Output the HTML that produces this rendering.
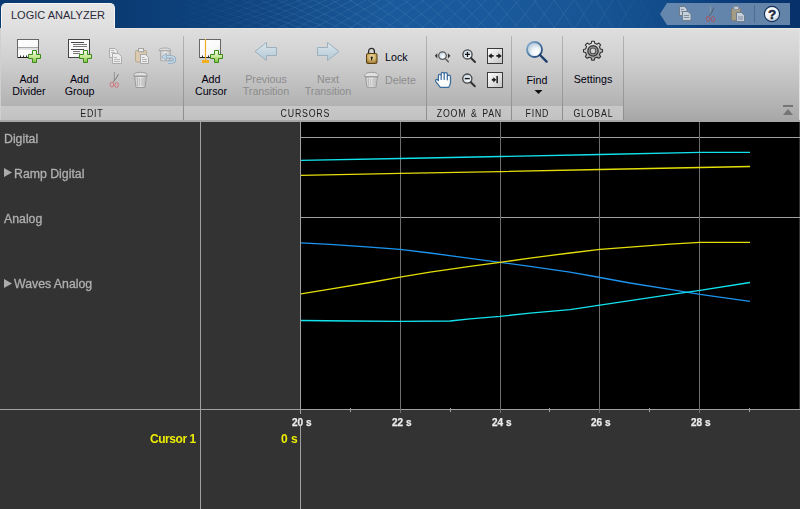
<!DOCTYPE html>
<html><head><meta charset="utf-8">
<style>
*{margin:0;padding:0;box-sizing:border-box}
html,body{width:800px;height:509px;overflow:hidden;background:#333;font-family:"Liberation Sans",sans-serif}
.abs{position:absolute}
#hdr{left:0;top:0;width:800px;height:28px;background:linear-gradient(90deg,#0a3a72 0%,#0b3b73 15%,#0f4580 31%,#1a599b 48%,#1a599b 62%,#175494 75%,#114a88 84%,#0a3a78 92%,#06316a 100%)}
#tab{left:1px;top:3px;width:114px;height:26px;border-radius:5px 5px 0 0;background:linear-gradient(#e6e6e6,#dfdfdf);border:1px solid #f6f6f6;border-bottom:none}
#tab span{position:absolute;left:9px;top:5px;font-size:11px;color:#2a2a3a;letter-spacing:0px}
#tb{left:0;top:28px;width:800px;height:94px;background:linear-gradient(#dfdfdf 0%,#d0d0d0 33%,#b5b5b5 78%,#acacac 91%,#a6a6a6 100%)}
.band{position:absolute;top:78px;height:14px;background:linear-gradient(#c8c8c8,#c2c2c2)}
.sep{position:absolute;top:8px;width:1px;height:84px;background:linear-gradient(#b4b4b4,#8c8c8c)}
.lbl{position:absolute;font-size:10.7px;line-height:12px;color:#00000f;text-align:center;white-space:nowrap}
.dis{color:#8c8c8c}
.grp{position:absolute;top:80px;font-size:10px;letter-spacing:0.9px;word-spacing:1.5px;color:#202020;text-align:center;padding-left:0.9px;transform:scaleX(0.88)}
#dark{left:0;top:122px;width:800px;height:387px;background:#333}
.ll{position:absolute;font-size:12.3px;color:#b0b0b0;white-space:nowrap;will-change:transform;-webkit-text-stroke:0.3px #b0b0b0}
.tick{position:absolute;top:414px;height:12px;padding:4px 1px 0 1px;line-height:10px;background:#333;font-size:10px;font-weight:bold;color:#ececec;white-space:nowrap;will-change:transform;-webkit-text-stroke:0.25px #ececec}
</style></head><body>
<div id="hdr" class="abs"></div>
<svg class="abs" style="left:0;top:0" width="800" height="28">
<defs>
<linearGradient id="mfade" x1="0" y1="0" x2="800" y2="0" gradientUnits="userSpaceOnUse">
<stop offset="0.20" stop-color="#fff" stop-opacity="0"/>
<stop offset="0.40" stop-color="#fff" stop-opacity="1"/>
<stop offset="0.72" stop-color="#fff" stop-opacity="1"/>
<stop offset="0.86" stop-color="#fff" stop-opacity="0"/>
</linearGradient>
<mask id="mm"><rect width="800" height="28" fill="url(#mfade)"/></mask>
</defs>
<g mask="url(#mm)"><path d="M-100.0,28L-15.2,0M-100.0,0L-15.2,28M-82.0,28L2.8,0M-82.0,0L2.8,28M-64.0,28L20.8,0M-64.0,0L20.8,28M-46.0,28L38.8,0M-46.0,0L38.8,28M-28.0,28L56.8,0M-28.0,0L56.8,28M-10.0,28L74.8,0M-10.0,0L74.8,28M8.0,28L92.8,0M8.0,0L92.8,28M26.0,28L110.8,0M26.0,0L110.8,28M44.0,28L128.8,0M44.0,0L128.8,28M62.0,28L146.8,0M62.0,0L146.8,28M80.0,28L164.8,0M80.0,0L164.8,28M98.0,28L182.8,0M98.0,0L182.8,28M116.0,28L200.8,0M116.0,0L200.8,28M134.0,28L218.8,0M134.0,0L218.8,28M152.0,28L236.8,0M152.0,0L236.8,28M170.0,28L254.8,0M170.0,0L254.8,28M188.0,28L272.8,0M188.0,0L272.8,28M206.0,28L288.1,0M206.0,0L288.1,28M224.0,28L301.3,0M224.0,0L301.3,28M242.0,28L313.7,0M242.0,0L313.7,28M260.0,28L326.5,0M260.0,0L326.5,28M278.0,28L339.5,0M278.0,0L339.5,28M296.0,28L352.8,0M296.0,0L352.8,28M314.0,28L366.5,0M314.0,0L366.5,28M332.0,28L380.4,0M332.0,0L380.4,28M350.0,28L394.6,0M350.0,0L394.6,28M368.0,28L409.2,0M368.0,0L409.2,28M386.0,28L424.0,0M386.0,0L424.0,28M404.0,28L439.1,0M404.0,0L439.1,28M422.0,28L454.4,0M422.0,0L454.4,28M440.0,28L470.0,0M440.0,0L470.0,28M458.0,28L485.9,0M458.0,0L485.9,28M476.2,28L502.1,0M476.2,0L502.1,28M494.9,28L518.9,0M494.9,0L518.9,28M514.1,28L536.4,0M514.1,0L536.4,28M533.8,28L554.5,0M533.8,0L554.5,28M554.1,28L573.3,0M554.1,0L573.3,28M574.8,28L592.7,0M574.8,0L592.7,28M596.2,28L612.8,0M596.2,0L612.8,28M618.1,28L633.6,0M618.1,0L633.6,28M640.1,28L655.4,0M640.1,0L655.4,28M662.1,28L677.4,0M662.1,0L677.4,28M684.1,28L699.4,0M684.1,0L699.4,28M706.1,28L721.4,0M706.1,0L721.4,28M728.1,28L743.4,0M728.1,0L743.4,28M750.1,28L765.4,0M750.1,0L765.4,28M772.1,28L787.4,0M772.1,0L787.4,28M794.1,28L809.4,0M794.1,0L809.4,28" fill="none" stroke="#9ab8dc" stroke-opacity="0.17" stroke-width="0.8"/></g>
<path d="M660,14 L667,3 H790 V25 H667 Z" fill="#7492b4" fill-opacity="0.85"/>
<g stroke="#6e7c8c" fill="#c6d0da" stroke-width="1">
<path d="M679.5,6.5 H684.5 L687,9 V15.5 H679.5 Z"/>
<path d="M681,9.5 h2.5 M681,11.5 h3" stroke="#7e8c9c"/>
<path d="M682.5,11.5 H688 L691,14.5 V20.5 H682.5 Z"/>
<path d="M684,15.5 h5 M684,17.5 h5" stroke="#7e8c9c"/>
</g>
<line x1="710.4" y1="6" x2="710.4" y2="15" stroke="#94a0a0" stroke-width="0.7"/>
<path d="M714,7.5 Q712.3,12 709.3,16" fill="none" stroke="#4c5c6c" stroke-width="1"/>
<ellipse cx="708" cy="18.8" rx="1.7" ry="2.6" fill="none" stroke="#a85464" stroke-width="1"/>
<ellipse cx="712.9" cy="19.2" rx="1.7" ry="2.6" fill="none" stroke="#a85464" stroke-width="1"/>
<rect x="731.5" y="8.5" width="9" height="12" rx="1" fill="#a39d88" stroke="#857f70"/>
<rect x="734" y="6.5" width="4.5" height="3" fill="#c4ccd4" stroke="#8a96a2"/>
<path d="M736.5,12.5 H741.5 L744.5,15.5 V21.5 H736.5 Z" fill="#c6d0da" stroke="#6e7c8c"/>
<path d="M738,17 h5 M738,19 h5" stroke="#7e8c9c"/>
<line x1="754.5" y1="5" x2="754.5" y2="23" stroke="#4e6e90" stroke-width="1"/>
<defs><radialGradient id="helpg" cx="0.4" cy="0.3" r="0.8"><stop offset="0" stop-color="#ffffff"/><stop offset="0.6" stop-color="#f0f2f6"/><stop offset="1" stop-color="#9fb0c4"/></radialGradient></defs>
<circle cx="772" cy="14" r="7.6" fill="url(#helpg)" stroke="#143058" stroke-width="1.1"/>
<text x="772.2" y="18.9" text-anchor="middle" font-family="Liberation Sans" font-weight="bold" font-size="13.5" fill="#1c2a40" stroke="#1c2a40" stroke-width="0.5">?</text>
</svg>
<div id="tab" class="abs"><span>LOGIC ANALYZER</span></div>
<div id="tb" class="abs">
  <div class="abs" style="left:0;top:0;width:1px;height:92px;background:#cfcfcf"></div>
  <div class="abs" style="left:799px;top:0;width:1px;height:92px;background:#e2e2e2"></div>
  <div class="abs" style="left:115px;top:0;width:685px;height:1px;background:#e8e7e4"></div>
  <div class="band" style="left:1px;width:182px"></div>
  <div class="band" style="left:184px;width:242px"></div>
  <div class="band" style="left:427px;width:84px"></div>
  <div class="band" style="left:512px;width:50px"></div>
  <div class="band" style="left:563px;width:60px"></div>
  <div class="sep" style="left:183px"></div>
  <div class="sep" style="left:426px"></div>
  <div class="sep" style="left:511px"></div>
  <div class="sep" style="left:562px"></div>
  <div class="sep" style="left:623px"></div>
  <div class="lbl" style="left:4px;width:50px;top:45px">Add<br>Divider</div>
  <div class="lbl" style="left:54.5px;width:50px;top:45px">Add<br>Group</div>
  <div class="lbl" style="left:186px;width:50px;top:45px">Add<br>Cursor</div>
  <div class="lbl dis" style="left:236px;width:60px;top:45px">Previous<br>Transition</div>
  <div class="lbl dis" style="left:298px;width:60px;top:45px">Next<br>Transition</div>
  <div class="lbl" style="left:385px;top:22.5px;text-align:left">Lock</div>
  <div class="lbl dis" style="left:385px;top:46px;text-align:left">Delete</div>
  <div class="lbl" style="left:512px;width:50px;top:46px">Find</div>
  <div class="lbl" style="left:563px;width:60px;top:45px">Settings</div>
  <div class="grp" style="left:0;width:183px">EDIT</div>
  <div class="grp" style="left:184px;width:242px">CURSORS</div>
  <div class="grp" style="left:427px;width:84px">ZOOM &amp; PAN</div>
  <div class="grp" style="left:512px;width:50px">FIND</div>
  <div class="grp" style="left:563px;width:60px">GLOBAL</div>
</div>
<svg class="abs" style="left:0;top:0" width="800" height="122">
<defs>
  <linearGradient id="pg" x1="0" y1="0" x2="0" y2="1"><stop offset="0" stop-color="#f4fce8"/><stop offset="0.5" stop-color="#c8e89a"/><stop offset="1" stop-color="#84c040"/></linearGradient>
  <linearGradient id="docg" x1="0" y1="0" x2="1" y2="1"><stop offset="0" stop-color="#ffffff"/><stop offset="0.6" stop-color="#fafafa"/><stop offset="1" stop-color="#d8d8d8"/></linearGradient>
  <linearGradient id="arg" x1="0" y1="0" x2="0" y2="1"><stop offset="0" stop-color="#dbe7ee"/><stop offset="1" stop-color="#b3c7d3"/></linearGradient>
  <linearGradient id="boxg" x1="0" y1="0" x2="1" y2="1"><stop offset="0" stop-color="#ffffff"/><stop offset="1" stop-color="#c4c4c4"/></linearGradient>
  <radialGradient id="lensg" cx="0.6" cy="0.65" r="0.6"><stop offset="0" stop-color="#ffffff"/><stop offset="1" stop-color="#c6d8e6"/></radialGradient>
  <radialGradient id="lockg" cx="0.5" cy="0.35" r="0.7"><stop offset="0" stop-color="#f4e6b4"/><stop offset="0.6" stop-color="#c8a65a"/><stop offset="1" stop-color="#8a6a28"/></radialGradient>
  <linearGradient id="trg" x1="0" y1="0" x2="1" y2="0"><stop offset="0" stop-color="#c8c8c8"/><stop offset="0.5" stop-color="#ececec"/><stop offset="1" stop-color="#c0c0c0"/></linearGradient>
  
</defs>
<!-- Add Divider -->
<rect x="17.5" y="39.5" width="21" height="18" fill="url(#docg)" stroke="#666"/>
<line x1="18" y1="57.5" x2="38" y2="57.5" stroke="#222"/>
<rect x="18" y="47" width="20" height="1.3" fill="#a8a8a8"/>
<rect x="18" y="48.3" width="20" height="1.5" fill="#e2e2e2"/>
<path d="M20.5,57 v-1.5 M23.5,57 v-1.5 M26.5,57 v-1.5" stroke="#333" stroke-width="1"/>
<g transform="translate(28,50)"><path d="M4.5,0.5 H8.5 V4.5 H12.5 V8.5 H8.5 V12.5 H4.5 V8.5 H0.5 V4.5 H4.5 Z" fill="url(#pg)" stroke="#3a8a1a" stroke-width="1"/></g>
<!-- Add Group -->
<rect x="68.5" y="39.5" width="21" height="18" fill="url(#docg)" stroke="#444"/>
<g stroke-width="1">
<line x1="71" y1="42.5" x2="84" y2="42.5" stroke="#444"/>
<line x1="73" y1="44.5" x2="87" y2="44.5" stroke="#777"/>
<line x1="73" y1="46.5" x2="87" y2="46.5" stroke="#777"/>
<line x1="71" y1="49.5" x2="84" y2="49.5" stroke="#444"/>
<line x1="73" y1="51.5" x2="80" y2="51.5" stroke="#777"/>
<line x1="73" y1="53.5" x2="80" y2="53.5" stroke="#777"/>
</g>
<g transform="translate(79,50)"><path d="M4.5,0.5 H8.5 V4.5 H12.5 V8.5 H8.5 V12.5 H4.5 V8.5 H0.5 V4.5 H4.5 Z" fill="url(#pg)" stroke="#3a8a1a" stroke-width="1"/></g>
<!-- copy disabled -->
<g stroke="#ababab" fill="#ececec" stroke-width="1">
<path d="M109.5,48.5 H115 L117.5,51 V57.5 H109.5 Z"/>
<path d="M112.5,53.5 H118.5 L121.5,56.5 V63.5 H112.5 Z"/>
<path d="M111,50.5 h3 M111,52.5 h4 M114,57.5 h3 M114,59.5 h6 M114,61.5 h6" stroke="#b8b8b8"/>
</g>
<!-- paste disabled -->
<rect x="135.5" y="50.5" width="11" height="11.5" rx="1.2" fill="#dccab0" stroke="#bba98f"/>
<rect x="138.5" y="48.5" width="5" height="3.2" fill="#ececec" stroke="#a4a4a4"/>
<path d="M140.5,54.5 H145.5 L148.5,57.5 V63.5 H140.5 Z" fill="#ededed" stroke="#a8a8a8"/>
<path d="M142,57.5 h2.5 M142,59.5 h5 M142,61.5 h5" stroke="#b0b0b0"/>
<!-- undo delete disabled -->
<path d="M159,50.5 Q159,48 165,48 Q171,48 171,50.5 Z" fill="#e0e0e0" stroke="#a8a8a8"/>
<path d="M160.3,50.8 L160.8,60.8 H169.8 L170.3,50.8 Z" fill="url(#trg)" stroke="#aaa"/>
<path d="M165.5,56.8 H170.5 Q174.6,56.8 174.6,59.5 Q174.6,62.2 170.5,62.2 H168" fill="none" stroke="#8eaac2" stroke-width="3.2"/>
<path d="M165.5,56.8 H170.5 Q174.6,56.8 174.6,59.5 Q174.6,62.2 170.5,62.2 H168" fill="none" stroke="#c6d9e7" stroke-width="1.4"/>
<path d="M161.8,56.8 L166.3,53.2 V60.4 Z" fill="#c6d9e7" stroke="#8eaac2" stroke-width="0.9" stroke-linejoin="round"/>
<!-- scissors disabled -->
<line x1="114.4" y1="72" x2="114.4" y2="80.5" stroke="#8c8c8c" stroke-width="0.9"/>
<path d="M118.5,74.2 Q116.5,78.5 113.2,82" fill="none" stroke="#777" stroke-width="1"/>
<ellipse cx="111.9" cy="84.6" rx="1.8" ry="2.5" fill="none" stroke="#cf7478" stroke-width="1"/>
<ellipse cx="116.6" cy="85" rx="1.8" ry="2.5" fill="none" stroke="#cf7478" stroke-width="1"/>
<!-- trash disabled -->
<path d="M133.5,76 Q133.5,72.3 140.5,72.3 Q147.5,72.3 147.5,76 Z" fill="#e0e0e0" stroke="#9a9a9a"/>
<path d="M134.5,76.5 L136,87.5 H145 L146.5,76.5 Z" fill="url(#trg)" stroke="#9a9a9a"/>
<path d="M137.6,78 V86 M139.8,78 V86 M142,78 V86 M144,78 V86" stroke="#b0b0b0" stroke-width="0.9"/>
<!-- Add Cursor -->
<rect x="199.5" y="39.5" width="21" height="18" fill="url(#docg)" stroke="#666"/>
<line x1="200" y1="57.5" x2="210" y2="57.5" stroke="#222"/>
<path d="M202.5,57 v-1.5 M208.5,57 v-1.5" stroke="#333"/>
<line x1="205.5" y1="39" x2="205.5" y2="60" stroke="#f2b01e" stroke-width="1.2"/>
<rect x="202" y="60" width="7" height="3" fill="#f2b01e"/>
<g transform="translate(210,50)"><path d="M4.5,0.5 H8.5 V4.5 H12.5 V8.5 H8.5 V12.5 H4.5 V8.5 H0.5 V4.5 H4.5 Z" fill="url(#pg)" stroke="#3a8a1a" stroke-width="1"/></g>
<!-- arrows disabled -->
<path id="larr" d="M255,51.5 L266.5,42.5 V47.5 H276.5 V55.5 H266.5 V60.5 Z" fill="url(#arg)" stroke="#9cb0be" stroke-width="1"/>
<path d="M339,51.5 L327.5,42.5 V47.5 H317.5 V55.5 H327.5 V60.5 Z" fill="url(#arg)" stroke="#9cb0be" stroke-width="1"/>
<!-- lock -->
<path d="M368.6,54 V51.2 A2.9,2.9 0 0 1 374.4,51.2 V54" fill="none" stroke="#2a2a2a" stroke-width="1.3"/>
<rect x="366.5" y="53.5" width="10.5" height="10" rx="1.3" fill="url(#lockg)" stroke="#5a4214"/>
<circle cx="371.7" cy="57.6" r="1.1" fill="#111"/>
<rect x="371.2" y="57.6" width="1" height="3" fill="#111"/>
<!-- delete trash disabled -->
<path d="M364.5,76.5 Q364.5,72.3 371.5,72.3 Q378.5,72.3 378.5,76.5 Z" fill="#e2e2e2" stroke="#9c9c9c"/>
<path d="M365.5,77 L367,87.3 H376 L377.5,77 Z" fill="url(#trg)" stroke="#9c9c9c"/>
<path d="M368.6,78.5 V86 M370.8,78.5 V86 M373,78.5 V86 M375,78.5 V86" stroke="#b4b4b4" stroke-width="0.9"/>
<!-- zoom x -->
<circle cx="442.5" cy="55.6" r="3.8" fill="url(#lensg)" stroke="#5a5a5a" stroke-width="1.3"/>
<line x1="445.4" y1="58.6" x2="448.3" y2="61.8" stroke="#555" stroke-width="1.4" stroke-linecap="round"/>
<path d="M434.8,55.8 L437.3,53.2 V58.4 Z M450.4,55.8 L447.9,53.2 V58.4 Z" fill="#333"/>
<!-- zoom in -->
<circle cx="467.5" cy="54.4" r="4.6" fill="url(#lensg)" stroke="#444" stroke-width="1.3"/>
<path d="M465,54.4 H470 M467.5,51.9 V56.9" stroke="#111" stroke-width="1.3"/>
<line x1="471" y1="58" x2="475" y2="62" stroke="#333" stroke-width="2" stroke-linecap="round"/>
<!-- zoom out -->
<circle cx="467.3" cy="78.6" r="4.6" fill="url(#lensg)" stroke="#444" stroke-width="1.3"/>
<path d="M464.8,78.6 H469.8" stroke="#111" stroke-width="1.4"/>
<line x1="470.8" y1="82.2" x2="474.8" y2="86.2" stroke="#333" stroke-width="2" stroke-linecap="round"/>
<!-- hand -->
<path d="M440.3,87.4 L436,81.8 Q435,80.2 436.2,79.6 Q437.3,79.1 438.2,80.3 L438.4,80.6 V75.8 Q438.4,74.3 439.8,74.3 Q441.2,74.3 441.2,75.8 V79.4 V73.9 Q441.2,72.4 442.7,72.4 Q444.2,72.4 444.2,73.9 V79.4 V74.1 Q444.2,72.6 445.8,72.6 Q447.3,72.6 447.3,74.1 V79.8 V76.7 Q447.3,75.2 448.9,75.2 Q450.5,75.2 450.5,76.7 V82.3 Q450.3,85.6 448.6,87.4 Z" fill="#fcfcfc" stroke="#3a6c9e" stroke-width="1.25" stroke-linejoin="round"/>
<!-- fit box 1 -->
<rect x="487.5" y="48.5" width="15" height="15" fill="url(#boxg)" stroke="#3a3a3a"/>
<path d="M488.2,55.9 L491.7,53.2 V58.6 Z M501.8,55.9 L498.3,53.2 V58.6 Z" fill="#1a1a1a"/>
<path d="M491,55.9 H493.6 M496.4,55.9 H499" stroke="#1a1a1a" stroke-width="1.8"/>
<!-- fit box 2 -->
<rect x="487.5" y="72.5" width="15" height="15" fill="url(#boxg)" stroke="#3a3a3a"/>
<path d="M491.8,79.8 H494.5" stroke="#1a1a1a" stroke-width="1.8"/>
<path d="M496.3,79.8 L493.3,77.2 V82.4 Z" fill="#1a1a1a"/>
<rect x="496.4" y="76" width="1.5" height="7.2" fill="#1a1a1a"/>
<!-- find -->
<defs><linearGradient id="ringg" x1="0" y1="0" x2="1" y2="1"><stop offset="0" stop-color="#8db4d4"/><stop offset="0.5" stop-color="#4a78a2"/><stop offset="1" stop-color="#163a6a"/></linearGradient>
<radialGradient id="lens2" cx="0.62" cy="0.68" r="0.55"><stop offset="0" stop-color="#ffffff"/><stop offset="0.5" stop-color="#f2f6f9"/><stop offset="1" stop-color="#c2d4e2"/></radialGradient>
<linearGradient id="gearg" x1="0" y1="0" x2="0.4" y2="1"><stop offset="0" stop-color="#f6f6f6"/><stop offset="1" stop-color="#a4a4a4"/></linearGradient></defs>
<circle cx="534.5" cy="49.5" r="7.5" fill="url(#lens2)" stroke="url(#ringg)" stroke-width="1.8"/>
<line x1="540" y1="55" x2="546.6" y2="61.6" stroke="#1d3d6b" stroke-width="2.4" stroke-linecap="round"/>
<path d="M534.5,90 H542.5 L538.5,94 Z" fill="#111"/>
<!-- gear -->
<path d="M591.23,43.31 L591.72,41.19 L594.28,41.19 L594.77,43.31 L596.97,44.22 L598.82,43.07 L600.63,44.88 L599.48,46.73 L600.39,48.93 L602.51,49.42 L602.51,51.98 L600.39,52.47 L599.48,54.67 L600.63,56.52 L598.82,58.33 L596.97,57.18 L594.77,58.09 L594.28,60.21 L591.72,60.21 L591.23,58.09 L589.03,57.18 L587.18,58.33 L585.37,56.52 L586.52,54.67 L585.61,52.47 L583.49,51.98 L583.49,49.42 L585.61,48.93 L586.52,46.73 L585.37,44.88 L587.18,43.07 L589.03,44.22 Z" fill="url(#gearg)" stroke="#333" stroke-width="1.1" stroke-linejoin="round"/>
<circle cx="593" cy="50.9" r="5.8" fill="#383838"/>
<circle cx="593" cy="50.9" r="4.5" fill="#a0a0a0"/>
<circle cx="593" cy="50.9" r="3.4" fill="#4c4c4c"/>
<circle cx="593" cy="50.9" r="2.3" fill="#d2d2d2"/>
<!-- collapse -->
<rect x="783" y="105" width="10" height="2" fill="#757575"/>
<path d="M783,115 H793 L788,109 Z" fill="#757575"/>
</svg>
<div id="dark" class="abs"></div>
<div class="ll" style="left:4px;top:132px">Digital</div>
<div class="ll" style="left:14px;top:167px">Ramp Digital</div>
<div class="ll" style="left:4px;top:212px">Analog</div>
<div class="ll" style="left:14px;top:277px">Waves Analog</div>
<svg class="abs" style="left:0;top:0" width="800" height="509">
  <line x1="200.5" y1="122" x2="200.5" y2="509" stroke="#a0a0a0"/>
  <rect x="301" y="122" width="498" height="287" fill="#000"/>
  <line x1="300.5" y1="122" x2="300.5" y2="509" stroke="#a0a0a0"/>
  <line x1="0" y1="409.5" x2="800" y2="409.5" stroke="#a0a0a0"/>
  <line x1="301" y1="137.5" x2="800" y2="137.5" stroke="#a0a0a0"/>
  <line x1="301" y1="217.5" x2="800" y2="217.5" stroke="#a0a0a0"/>
  <g stroke="#6e6e6e">
  <line x1="400.5" y1="122" x2="400.5" y2="413"/>
  <line x1="500.5" y1="122" x2="500.5" y2="413"/>
  <line x1="599.5" y1="122" x2="599.5" y2="413"/>
  <line x1="699.5" y1="122" x2="699.5" y2="413"/>
  </g>
  <path d="M350.5,408 V412 M450.5,408 V412 M549.5,408 V412 M649.5,408 V412 M749.5,408 V412" stroke="#a0a0a0"/>
  <polygon points="4,168 12,172.5 4,177" fill="#ababab"/>
  <polygon points="4,279 12,283.5 4,288" fill="#ababab"/>
  <g fill="none" stroke-width="1.3">
  <polyline stroke="#12e2ee" points="301,160.4 400,158.5 500,156.5 600,154.5 700,152.3 750,152.3"/>
  <polyline stroke="#e4de08" points="301,175.4 400,173.4 500,171.6 600,169.5 700,167.5 750,166.5"/>
  <polyline stroke="#1c94f0" points="301,242.8 330,244.3 370,247.1 400,249.3 430,253 470,258.4 500,262.4 530,266.3 570,272.2 600,277.5 630,283 670,289.4 700,294.3 750,301.3"/>
  <polyline stroke="#e4de08" points="301,293.9 330,289.2 370,282.5 400,277.2 430,272.2 470,266.3 500,262.4 530,258.1 570,253 600,249.3 630,247.1 670,244.1 700,242.4 750,242.4"/>
  <polyline stroke="#12e2ee" points="301,320.5 350,321 400,321.3 450,321 470,318.8 500,316.4 530,313.1 570,309.6 600,305.2 630,300.7 670,294.7 700,290.3 750,282.5"/>
  </g>
</svg>
<div class="tick" style="left:291px">20 s</div>
<div class="tick" style="left:391px">22 s</div>
<div class="tick" style="left:491px">24 s</div>
<div class="tick" style="left:590px">26 s</div>
<div class="tick" style="left:690px">28 s</div>
<div class="abs" style="left:150px;top:432px;font-size:12px;letter-spacing:-0.45px;font-weight:bold;color:#eded00;will-change:transform">Cursor 1</div>
<div class="abs" style="left:281px;top:432px;font-size:12px;font-weight:bold;color:#eded00;will-change:transform">0 s</div>
</body></html>
